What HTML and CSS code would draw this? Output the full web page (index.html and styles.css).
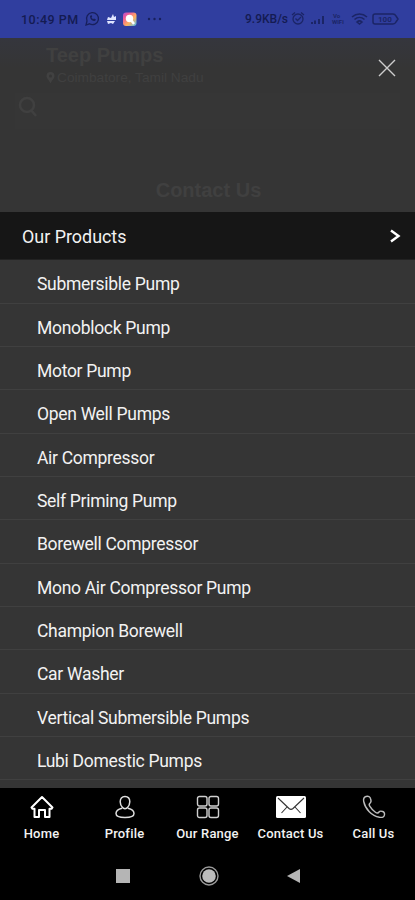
FILE: index.html
```html
<!DOCTYPE html>
<html lang="en">

<head>
    <meta charset="UTF-8">
    <meta name="viewport" content="width=device-width, initial-scale=1.0">
    <title>Teep Pumps</title>
    <link rel="stylesheet" href="styles.css">
</head>

<body>
    <div class="screen">
        <!-- Status bar -->
        <div class="status-bar">
            <span class="time">10:49 PM</span>
            <svg class="status-left" width="86" height="18" viewBox="0 0 86 18">
                <path d="M2 15l1-4a6 6 0 1 1 2.500 2.800z" fill="none" stroke="#18205c" stroke-width="1.300" />
                <path d="M6 6c0 3 2 5 5 5l1-1.500-2-1-1 .8-1.500-1.800.7-1-.8-1.500z" fill="#18205c" />
                <path d="M24 7l3 1 2-4 1 3 2-1v4h-9zM23 11h8l-2 3-2-1-3 1z" fill="#dfe5ff" />
                <defs>
                    <linearGradient id="gallery" x1="0" y1="0" x2="1" y2="1">
                        <stop offset="0" stop-color="#a74fd0" />
                        <stop offset=".25" stop-color="#ee5b9c" />
                        <stop offset=".6" stop-color="#ffb15c" />
                        <stop offset="1" stop-color="#46bdf0" />
                    </linearGradient>
                </defs>
                <rect x="39" y="2.500" width="13.500" height="13.500" rx="3" fill="url(#gallery)" />
                <circle cx="45.500" cy="8.500" r="3.700" fill="#fff" />
                <path d="M47 10l3 4" stroke="#fff" stroke-width="2.500" />
                <g fill="#18205c">
                    <circle cx="65" cy="9" r="1.200" />
                    <circle cx="70.500" cy="9" r="1.200" />
                    <circle cx="76" cy="9" r="1.200" />
                </g>
            </svg>
            <span class="speed">9.9KB/s</span>
            <svg class="status-right" width="110" height="18" viewBox="0 0 110 18" fill="none" stroke="#1b2566" stroke-width="1.300">
                <circle cx="7" cy="9" r="5" />
                <path d="M4.500 8.500l2 2L10 7M1 5l3-2.500M13 5l-3-2.500" />
                <path d="M21 14v-2M24 14v-3.500M28 14V9M32 14V6" stroke-width="2" />
                <path d="M61 7c4.500-4 10.500-4 15 0M63.500 9.500c3-2.700 7-2.700 10 0M66 12c1.500-1.400 3.500-1.400 5 0l-2.500 2z" stroke-width="1.600" />
                <path d="M84 4h18q2 0 3 2l2 3-2 3q-1 2-3 2H84q-2 0-2-2V6q0-2 2-2z" stroke-width="1.500" />
                <g class="tiny" fill="#1b2566" stroke="none">
                    <text x="42" y="8">Vo</text>
                    <text x="41" y="14">WiFi</text>
                    <text x="87" y="12" class="battery">100</text>
                </g>
            </svg>
        </div>

        <!-- Dimmed page header -->
        <div class="page-header">
            <div class="header-top">
                <div class="company">
                    <h1>Teep Pumps</h1>
                    <p>
                        <svg width="9" height="12" viewBox="0 0 9 12">
                            <path d="M4.500 11.500C3 8 .5 6.500.5 4a4 4 0 0 1 8 0c0 2.500-2.500 4-4 7.500z" fill="#414141" />
                            <circle cx="4.500" cy="4" r="1.500" fill="#353535" />
                        </svg>
                        Coimbatore, Tamil Nadu
                    </p>
                </div>
                <svg class="close" width="18" height="18" viewBox="0 0 18 18">
                    <path d="M1 1l16 16M17 1L1 17" stroke="#cdcdcd" stroke-width="1.400" />
                </svg>
            </div>
            <div class="search">
                <svg width="20" height="22" viewBox="0 0 20 22" fill="none" stroke="#404040" stroke-width="2.500">
                    <circle cx="9" cy="9" r="7" />
                    <path d="M13 14l5 6" />
                </svg>
            </div>
            <h2>Contact Us</h2>
        </div>

        <!-- Product menu -->
        <div class="menu">
            <div class="menu-title">
                <span>Our Products</span>
                <svg width="12" height="16" viewBox="0 0 12 16">
                    <path d="M2 2.500L9.500 8 2 13.500" fill="none" stroke="#fff" stroke-width="2.400" />
                </svg>
            </div>
            <ul class="menu-list">
                <li>Submersible Pump</li>
                <li>Monoblock Pump</li>
                <li>Motor Pump</li>
                <li>Open Well Pumps</li>
                <li>Air Compressor</li>
                <li>Self Priming Pump</li>
                <li>Borewell Compressor</li>
                <li>Mono Air Compressor Pump</li>
                <li>Champion Borewell</li>
                <li>Car Washer</li>
                <li>Vertical Submersible Pumps</li>
                <li>Lubi Domestic Pumps</li>
            </ul>
        </div>

        <!-- Bottom tabs -->
        <div class="tabs">
            <div class="tab">
                <svg width="26" height="24" viewBox="0 0 26 24" fill="none" stroke="#fff" stroke-width="2">
                    <path d="M2.500 12.500L13 2l10.500 10.500-1 1.300H20.500V22H16v-7h-6v7H5.500v-8.200h-2z" stroke-linejoin="round" />
                </svg>
                <span>Home</span>
            </div>
            <div class="tab">
                <svg width="22" height="24" viewBox="0 0 22 24" fill="none" stroke="#dedede" stroke-width="1.500">
                    <path d="M8.500 12.500C7 11 6.200 9 6.200 6.800c0-3 1.600-5.300 4.800-5.300s4.800 2.300 4.800 5.300c0 2.200-.8 4.200-2.300 5.700-1 1.500-4 1.500-5 0zM8 13.300c-3.500.8-6 2.800-6 5.200 0 2.500 4 4 9 4s9-1.500 9-4c0-2.400-2.500-4.400-6-5.200" />
                </svg>
                <span>Profile</span>
            </div>
            <div class="tab">
                <svg width="24" height="24" viewBox="0 0 24 24" fill="none" stroke="#cfcfcf" stroke-width="1.400">
                    <rect x="1.500" y="1.500" width="9.500" height="9.500" rx="2" />
                    <rect x="13" y="1.500" width="9.500" height="9.500" rx="2" />
                    <rect x="1.500" y="13" width="9.500" height="9.500" rx="2" />
                    <rect x="13" y="13" width="9.500" height="9.500" rx="2" />
                </svg>
                <span>Our Range</span>
            </div>
            <div class="tab">
                <svg width="30" height="24" viewBox="0 0 30 24">
                    <rect y="1" width="30" height="22" rx="1.500" fill="#fff" />
                    <path d="M2 3l11 10.500q2 1.800 4 0L28 3M11 12l-5.500 6M19 12l5.500 6" fill="none" stroke="#333" stroke-width="1.100" />
                </svg>
                <span>Contact Us</span>
            </div>
            <div class="tab">
                <svg width="24" height="24" viewBox="0 0 24 24" fill="none" stroke="#bdbdbd" stroke-width="1.400">
                    <path d="M4 1.500c-2 .6-2.800 2.400-2.300 5 1.500 7.500 8 14.500 15.800 15.800 2.800.4 4.800-.3 5-2.600.2-1.800-.3-2.700-1.800-3.200-1.700-.6-3-.6-3.700.5-.8 1.300-2.200 1.200-3.600.2-2.300-1.600-4.300-3.700-5.700-6-.9-1.500-.6-2.600.6-3.400 1-.7.9-2.300.2-4.300C8 1.700 6.500.8 4 1.500z" />
                </svg>
                <span>Call Us</span>
            </div>
        </div>

        <!-- System navigation -->
        <div class="system-nav">
            <svg width="14" height="14"><rect width="14" height="14" fill="#b5b5b5" /></svg>
            <svg width="20" height="20" viewBox="0 0 20 20">
                <circle cx="10" cy="10" r="9" fill="none" stroke="#9a9a9a" stroke-width="1.400" />
                <circle cx="10" cy="10" r="6.800" fill="#bdbdbd" />
            </svg>
            <svg width="14" height="16" viewBox="0 0 14 16"><path d="M0 8L13 1v14z" fill="#b5b5b5" /></svg>
        </div>
    </div>
</body>

</html>
```

FILE: styles.css
```css
* {
    box-sizing: border-box;
}

body {
    margin: 0;
    background-color: #000;
    font-family: Roboto, "Liberation Sans", sans-serif;
    color: #f2f2f2;
}

h1,
h2,
p,
ul {
    margin: 0;
    padding: 0;
}

svg {
    display: block;
    flex-shrink: 0;
}

.screen {
    width: 415px;
    height: 900px;
    display: flex;
    flex-direction: column;
    overflow: hidden;
    background-color: #353535;
}

/* Status bar */
.status-bar {
    height: 38px;
    flex-shrink: 0;
    display: flex;
    align-items: center;
    padding-left: 21px;
    background-color: #303e9f;
    color: #141b52;
    font-size: 12.500px;
    font-weight: 500;
    white-space: nowrap;
}

.time {
    width: 63px;
    letter-spacing: 0.5px;
}

.speed {
    width: 46px;
    margin-left: 75px;
    font-size: 12px;
}

.tiny {
    font-size: 6px;
    font-weight: 700;
}

.battery {
    font-size: 8px;
}

/* Dimmed page header */
.page-header {
    height: 174px;
    flex-shrink: 0;
    background: linear-gradient(#35363d, #353535 30px);
    color: #404040;
    font-family: "Liberation Sans", Arial, sans-serif;
}

.header-top {
    display: flex;
    justify-content: space-between;
    height: 55px;
    padding: 3px 19px 0 46px;
}

h1 {
    font-size: 20px;
    line-height: 28px;
}

.company p {
    display: flex;
    align-items: center;
    gap: 2px;
    font-size: 13.700px;
    line-height: 18px;
}

.close {
    margin-top: 18px;
}

.search {
    height: 36px;
    margin: 0 15px;
    padding: 3px;
    background-color: #363636;
}

h2 {
    margin-top: 49px;
    font-size: 20px;
    line-height: 24px;
    text-align: center;
    padding-left: 2px;
}

/* Product menu */
.menu {
    height: 576px;
    flex-shrink: 0;
    font-size: 17.500px;
}

.menu-title {
    display: flex;
    align-items: center;
    justify-content: space-between;
    height: 48.300px;
    padding: 1px 14px 0 22px;
    background-color: #161616;
    border-bottom: 1px solid #222;
    font-size: 17.900px;
}

.menu-list {
    list-style: none;
    letter-spacing: -0.300px;
}

.menu-list li {
    height: 43.350px;
    padding-left: 37px;
    line-height: 49px;
    border-bottom: 1px solid #404040;
}

/* Bottom tabs */
.tabs {
    display: grid;
    grid-template-columns: repeat(5, 83px);
    height: 62px;
    flex-shrink: 0;
    padding-top: 7px;
    background-color: #000;
    font-size: 13px;
    font-weight: 500;
    letter-spacing: 0.200px;
}

.tab {
    display: flex;
    flex-direction: column;
    align-items: center;
    gap: 6px;
    line-height: 17px;
    white-space: nowrap;
}

/* System navigation */
.system-nav {
    display: flex;
    align-items: center;
    justify-content: space-between;
    height: 50px;
    padding: 1px 114px 0 116px;
    background-color: #000;
}
```
